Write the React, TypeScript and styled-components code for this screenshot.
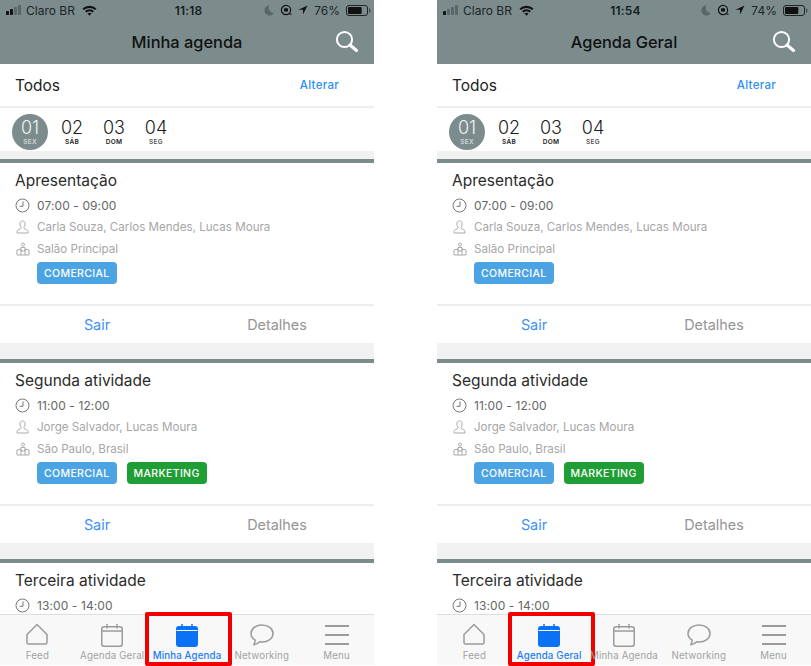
import React from "react";
import styled, { createGlobalStyle } from "styled-components";

const GlobalStyle = createGlobalStyle`
  html, body {
    margin: 0;
    padding: 0;
    background: #fff;
  }
  body {
    font-family: "Inter", "Liberation Sans", sans-serif;
  }
`;

const Page = styled.div`
  display: flex;
  justify-content: space-between;
  width: 811px;
  height: 666px;
  overflow: hidden;
`;

const Phone = styled.div`
  display: flex;
  flex-direction: column;
  width: 374px;
  height: 666px;
`;

const TopArea = styled.div`
  flex: none;
  height: 64px;
  background: #7c8c8d;
`;

const StatusBar = styled.div`
  display: grid;
  grid-template-columns: 1fr auto 1fr;
  align-items: center;
  height: 20px;
  padding: 0 3px 0 6px;
`;

const StatusLeft = styled.div`
  display: flex;
  align-items: center;
  gap: 4px;
  font-size: 12px;
  color: #1c2526;

  svg:last-child {
    margin-left: 3px;
  }
`;

const StatusTime = styled.div`
  font-size: 12px;
  font-weight: 600;
  color: #161e1f;
  letter-spacing: 0.2px;
`;

const StatusRight = styled.div`
  display: flex;
  align-items: center;
  justify-content: flex-end;
  gap: 6px;
  font-size: 12px;
  color: #1c2526;
`;

const NavBar = styled.div`
  position: relative;
  display: flex;
  align-items: center;
  justify-content: center;
  height: 44px;
`;

const NavTitle = styled.div`
  font-size: 16.4px;
  font-weight: 500;
  color: #111;
`;

const SearchButton = styled.div`
  position: absolute;
  right: 16px;
  top: 9px;
  width: 24px;
  height: 24px;
`;

const Scroller = styled.div`
  flex: 1;
  min-height: 0;
  overflow: hidden;
  background: #fff;
`;

const FilterRow = styled.div`
  display: flex;
  align-items: center;
  justify-content: space-between;
  height: 42px;
  padding: 0 35px 0 15px;
  border-bottom: 2px solid #eeeeee;
`;

const FilterLabel = styled.div`
  font-size: 15.5px;
  color: #222;
`;

const ChangeLink = styled.div`
  font-size: 11.5px;
  font-weight: 500;
  letter-spacing: 0.3px;
  color: #2c8ef8;
`;

const DateRow = styled.div`
  display: flex;
  align-items: center;
  box-sizing: border-box;
  height: 43px;
  padding: 4px 0 0 12px;
`;

const DateItem = styled.div<{ $active?: boolean }>`
  display: flex;
  flex-direction: column;
  align-items: center;
  justify-content: center;
  width: 36px;
  height: 36px;
  margin-right: 6px;
  border-radius: 50%;
  background: ${(p) => (p.$active ? "#7c8c8d" : "transparent")};
  color: ${(p) => (p.$active ? "#eef1f1" : "#1d1d1d")};
`;

const DateNumber = styled.div`
  font-size: 18px;
  font-weight: 300;
  line-height: 19px;
  margin-top: 1px;
`;

const DateWeekday = styled.div<{ $tone?: string }>`
  font-size: 6.5px;
  line-height: 9px;
  font-weight: 600;
  letter-spacing: 0.3px;
  margin-top: 1px;
  color: ${(p) => p.$tone || "inherit"};
`;

const Gap = styled.div`
  height: 8px;
  background: #f2f2f2;
`;

const Card = styled.div`
  border-top: 4px solid #7c8c8d;
  background: #fff;
`;

const CardBody = styled.div`
  height: 143px;
  box-sizing: border-box;
  padding: 8px 15px 0;
  border-bottom: 2px solid #eeeeee;
`;

const CardTitle = styled.div`
  font-size: 15.5px;
  line-height: 20px;
  color: #2b2b2b;
  margin-bottom: 3px;
`;

const InfoRow = styled.div<{ $dark?: boolean }>`
  display: flex;
  align-items: center;
  gap: 7px;
  height: 22px;
  font-size: ${(p) => (p.$dark ? "12px" : "11.6px")};
  letter-spacing: ${(p) => (p.$dark ? "0.1px" : "0")};
  color: ${(p) => (p.$dark ? "#666" : "#a6a6a6")};
`;

const IconSlot = styled.div`
  display: flex;
  justify-content: center;
  width: 15px;
`;

const Tags = styled.div`
  display: flex;
  gap: 10px;
  margin: 2px 0 0 22px;
`;

const Tag = styled.div<{ $color: string }>`
  display: flex;
  align-items: center;
  height: 22px;
  padding: 0 7px;
  border-radius: 4px;
  background: ${(p) => p.$color};
  color: #fff;
  font-size: 10.5px;
  font-weight: 500;
  letter-spacing: 0.35px;
`;

const Actions = styled.div`
  display: flex;
  height: 37px;
  padding: 0 7px;
`;

const ActionButton = styled.div<{ $primary?: boolean }>`
  flex: 1;
  display: flex;
  align-items: center;
  justify-content: center;
  font-size: 14.4px;
  color: ${(p) => (p.$primary ? "#3b94f6" : "#959595")};
`;

const CardGap = styled.div`
  height: 16px;
  background: #f2f2f2;
`;

const TabBar = styled.div`
  flex: none;
  display: grid;
  grid-template-columns: repeat(5, 1fr);
  height: 50px;
  margin-bottom: 1px;
  border-top: 1px solid #dedede;
  background: #f8f8f8;
`;

const Tab = styled.div<{ $active?: boolean; $boxOffset?: number }>`
  position: relative;
  display: flex;
  flex-direction: column;
  align-items: center;
  padding-top: 8px;
  white-space: nowrap;
  font-size: 9.7px;
  font-weight: ${(p) => (p.$active ? 500 : 400)};
  letter-spacing: 0.15px;
  color: ${(p) => (p.$active ? "#1a7cf5" : "#a2a2a2")};

  ${(p) =>
    p.$boxOffset !== undefined &&
    `
    &::after {
      content: "";
      position: absolute;
      top: -3px;
      left: ${p.$boxOffset}px;
      width: 79px;
      height: 46px;
      border: 4px solid #f00000;
      border-radius: 2px;
    }
  `}
`;

const TabIcon = styled.div`
  display: flex;
  justify-content: center;
  height: 24px;
  margin-bottom: 3px;
`;

const TabLabel = styled.div`
  line-height: 12px;
`;

const Signal = ({ bars }: { bars: number }) => (
  <svg width="16" height="10" viewBox="0 0 16 10">
    {[0, 1, 2, 3].map((i) => (
      <rect
        key={i}
        x={i * 4}
        y={6 - i * 2}
        width="3"
        height={4 + i * 2}
        rx="0.7"
        fill={i < bars ? "#111" : "#5a6768"}
      />
    ))}
  </svg>
);

const Wifi = () => (
  <svg width="15" height="11" viewBox="0 0 15 11">
    <path d="M0.5 3.6A10 10 0 0 1 14.5 3.6L13 5.1A8 8 0 0 0 2 5.1Z" fill="#111" />
    <path d="M3 6.1A6.4 6.4 0 0 1 12 6.1L10.5 7.6A4.3 4.3 0 0 0 4.5 7.6Z" fill="#111" />
    <path d="M5.5 8.6A2.9 2.9 0 0 1 9.5 8.6L7.5 10.8Z" fill="#111" />
  </svg>
);

const Moon = () => (
  <svg width="10" height="11" viewBox="0 0 10 11">
    <path d="M5.5 0.5A5 5 0 1 0 9.8 8 5 5 0 0 1 5.5 0.5Z" fill="#5a6768" />
  </svg>
);

const RotationLock = () => (
  <svg width="12" height="12" viewBox="0 0 12 12" fill="none">
    <circle cx="6" cy="6" r="4.6" stroke="#111" strokeWidth="1.2" />
    <rect x="4" y="4.2" width="4" height="3.4" rx="0.6" fill="#111" />
    <path d="M9 9.5L11.5 10.5" stroke="#111" strokeWidth="1.2" />
  </svg>
);

const Arrow = () => (
  <svg width="10" height="10" viewBox="0 0 10 10">
    <path d="M9.5 0.5L0.5 4.8H5V9.5Z" fill="#111" />
  </svg>
);

const Battery = ({ level }: { level: number }) => (
  <svg width="25" height="11" viewBox="0 0 25 11" fill="none">
    <rect x="0.5" y="0.5" width="21" height="10" rx="2.5" stroke="#222" />
    <rect x="2" y="2" width={18 * level} height="7" rx="1" fill="#111" />
    <rect x="23" y="3.5" width="1.3" height="4" rx="0.6" fill="#444" />
  </svg>
);

const SearchIcon = () => (
  <svg width="24" height="24" viewBox="0 0 24 24" fill="none" stroke="#fff">
    <circle cx="10.5" cy="10.5" r="7.6" strokeWidth="2" />
    <path d="M16 16L22.5 21.5" strokeWidth="3" strokeLinecap="round" />
  </svg>
);

const ClockIcon = () => (
  <svg width="15" height="15" viewBox="0 0 15 15" fill="none" stroke="#777" strokeWidth="1">
    <circle cx="7.5" cy="7.5" r="6.5" />
    <path d="M8 3.5V8.3H4.5" />
  </svg>
);

const PersonIcon = () => (
  <svg width="13" height="14" viewBox="0 0 13 14" fill="none" stroke="#aaa" strokeWidth="1">
    <path d="M6.5 1C4.7 1 3.9 2.3 3.9 3.8 3.9 5.5 4.6 6.7 5.1 7.3 5.4 7.8 5.2 8.4 4.5 8.7L2.2 9.8C1.3 10.2 1 10.9 1 11.6V13H12V11.6C12 10.9 11.7 10.2 10.8 9.8L8.5 8.7C7.8 8.4 7.6 7.8 7.9 7.3 8.4 6.7 9.1 5.5 9.1 3.8 9.1 2.3 8.3 1 6.5 1Z" />
  </svg>
);

const PlaceIcon = () => (
  <svg width="14" height="14" viewBox="0 0 14 14" fill="none" stroke="#aaa" strokeWidth="1">
    <circle cx="7" cy="2.5" r="1.5" />
    <path d="M5 5.5H9V9H5Z" />
    <path d="M1 8L5 7V13L1 13Z" />
    <path d="M9 7L13 8V13H9Z" />
    <path d="M5 13H9" />
  </svg>
);

const HomeIcon = () => (
  <svg width="24" height="24" viewBox="0 0 24 24" fill="none" stroke="#9b9b9b" strokeWidth="1.5">
    <path d="M2 11.5L12 1.5L22 11.5V19.5A1.5 1.5 0 0 1 20.5 21H3.5A1.5 1.5 0 0 1 2 19.5Z" strokeLinejoin="round" />
  </svg>
);

const CalendarIcon = ({ active }: { active?: boolean }) =>
  active ? (
    <svg width="22" height="24" viewBox="0 0 22 24">
      <path d="M3 3H19A3 3 0 0 1 22 6V21A3 3 0 0 1 19 24H3A3 3 0 0 1 0 21V6A3 3 0 0 1 3 3Z" fill="#0a72f5" />
      <path d="M0.5 7.5H21.5" stroke="#fff" strokeWidth="1" />
      <path d="M6 1V5M16 1V5" stroke="#0a72f5" strokeWidth="1.5" />
    </svg>
  ) : (
    <svg width="22" height="24" viewBox="0 0 22 24" fill="none" stroke="#9b9b9b" strokeWidth="1.5">
      <rect x="0.75" y="3.75" width="20.5" height="19.5" rx="2.5" />
      <path d="M0.75 8H21.25" />
      <path d="M6 1V5.5M16 1V5.5" />
    </svg>
  );

const ChatIcon = () => (
  <svg width="24" height="24" viewBox="0 0 24 24" fill="none" stroke="#9b9b9b" strokeWidth="1.5">
    <path d="M12 2C5.9 2 1 5.6 1 10.5 1 13.4 2.8 15.6 5.2 17.1 5.2 19 4.6 20.4 3.8 21.8 6.2 21.5 8.3 20.3 9.7 18.8 10.5 18.9 11.2 19 12 19 18.1 19 23 15.4 23 10.5 23 5.6 18.1 2 12 2Z" strokeLinejoin="round" />
  </svg>
);

const MenuIcon = () => (
  <svg width="24" height="24" viewBox="0 0 24 24" stroke="#9b9b9b" strokeWidth="2">
    <path d="M0 3H24M0 12H24M0 21H24" />
  </svg>
);

interface Activity {
  title: string;
  time: string;
  people: string;
  place?: string;
  tags?: { label: string; color: string }[];
}

const activities: Activity[] = [
  {
    title: "Apresentação",
    time: "07:00 - 09:00",
    people: "Carla Souza, Carlos Mendes, Lucas Moura",
    place: "Salão Principal",
    tags: [{ label: "COMERCIAL", color: "#4ba3e3" }],
  },
  {
    title: "Segunda atividade",
    time: "11:00 - 12:00",
    people: "Jorge Salvador, Lucas Moura",
    place: "São Paulo, Brasil",
    tags: [
      { label: "COMERCIAL", color: "#4ba3e3" },
      { label: "MARKETING", color: "#1f9e35" },
    ],
  },
  {
    title: "Terceira atividade",
    time: "13:00 - 14:00",
    people: "Jorge Salvador",
    place: "São Paulo, Brasil",
    tags: [],
  },
];

const days = [
  { n: "01", w: "SEX", tone: "#cfd6d6" },
  { n: "02", w: "SÁB", tone: "#222" },
  { n: "03", w: "DOM", tone: "#222" },
  { n: "04", w: "SEG", tone: "#555" },
];

interface ScreenProps {
  clock: string;
  battery: string;
  level: number;
  bars: number;
  title: string;
  activeTab: "Agenda Geral" | "Minha Agenda";
  tabs: string[];
  boxOffset: number;
}

const Screen = ({ clock, battery, level, bars, title, activeTab, tabs, boxOffset }: ScreenProps) => (
  <Phone>
    <TopArea>
      <StatusBar>
        <StatusLeft>
          <Signal bars={bars} />
          <span>Claro BR</span>
          <Wifi />
        </StatusLeft>
        <StatusTime>{clock}</StatusTime>
        <StatusRight>
          <Moon />
          <RotationLock />
          <Arrow />
          <span>{battery}</span>
          <Battery level={level} />
        </StatusRight>
      </StatusBar>
      <NavBar>
        <NavTitle>{title}</NavTitle>
        <SearchButton>
          <SearchIcon />
        </SearchButton>
      </NavBar>
    </TopArea>

    <Scroller>
      <FilterRow>
        <FilterLabel>Todos</FilterLabel>
        <ChangeLink>Alterar</ChangeLink>
      </FilterRow>
      <DateRow>
        {days.map((d, i) => (
          <DateItem key={d.n} $active={i === 0}>
            <DateNumber>{d.n}</DateNumber>
            <DateWeekday $tone={d.tone}>{d.w}</DateWeekday>
          </DateItem>
        ))}
      </DateRow>
      <Gap />
      {activities.map((a) => (
        <Card key={a.title}>
          <CardBody>
            <CardTitle>{a.title}</CardTitle>
            <InfoRow $dark>
              <IconSlot>
                <ClockIcon />
              </IconSlot>
              {a.time}
            </InfoRow>
            <InfoRow>
              <IconSlot>
                <PersonIcon />
              </IconSlot>
              {a.people}
            </InfoRow>
            <InfoRow>
              <IconSlot>
                <PlaceIcon />
              </IconSlot>
              {a.place}
            </InfoRow>
            <Tags>
              {a.tags?.map((t) => (
                <Tag key={t.label} $color={t.color}>
                  {t.label}
                </Tag>
              ))}
            </Tags>
          </CardBody>
          <Actions>
            <ActionButton $primary>Sair</ActionButton>
            <ActionButton>Detalhes</ActionButton>
          </Actions>
          <CardGap />
        </Card>
      ))}
    </Scroller>

    <TabBar>
      {tabs.map((t) => {
        const active = t === activeTab;
        return (
          <Tab key={t} $active={active} $boxOffset={active ? boxOffset : undefined}>
            <TabIcon>
              {t === "Feed" && <HomeIcon />}
              {(t === "Agenda Geral" || t === "Minha Agenda") && <CalendarIcon active={active} />}
              {t === "Networking" && <ChatIcon />}
              {t === "Menu" && <MenuIcon />}
            </TabIcon>
            <TabLabel>{t}</TabLabel>
          </Tab>
        );
      })}
    </TabBar>
  </Phone>
);

const tabs = ["Feed", "Agenda Geral", "Minha Agenda", "Networking", "Menu"];

export default function App() {
  return (
    <>
      <GlobalStyle />
      <Page>
        <Screen
          clock="11:18"
          battery="76%"
          level={0.76}
          bars={2}
          title="Minha agenda"
          activeTab="Minha Agenda"
          tabs={tabs}
          boxOffset={-5}
        />
        <Screen
          clock="11:54"
          battery="74%"
          level={0.74}
          bars={1}
          title="Agenda Geral"
          activeTab="Agenda Geral"
          tabs={tabs}
          boxOffset={-4}
        />
      </Page>
    </>
  );
}
